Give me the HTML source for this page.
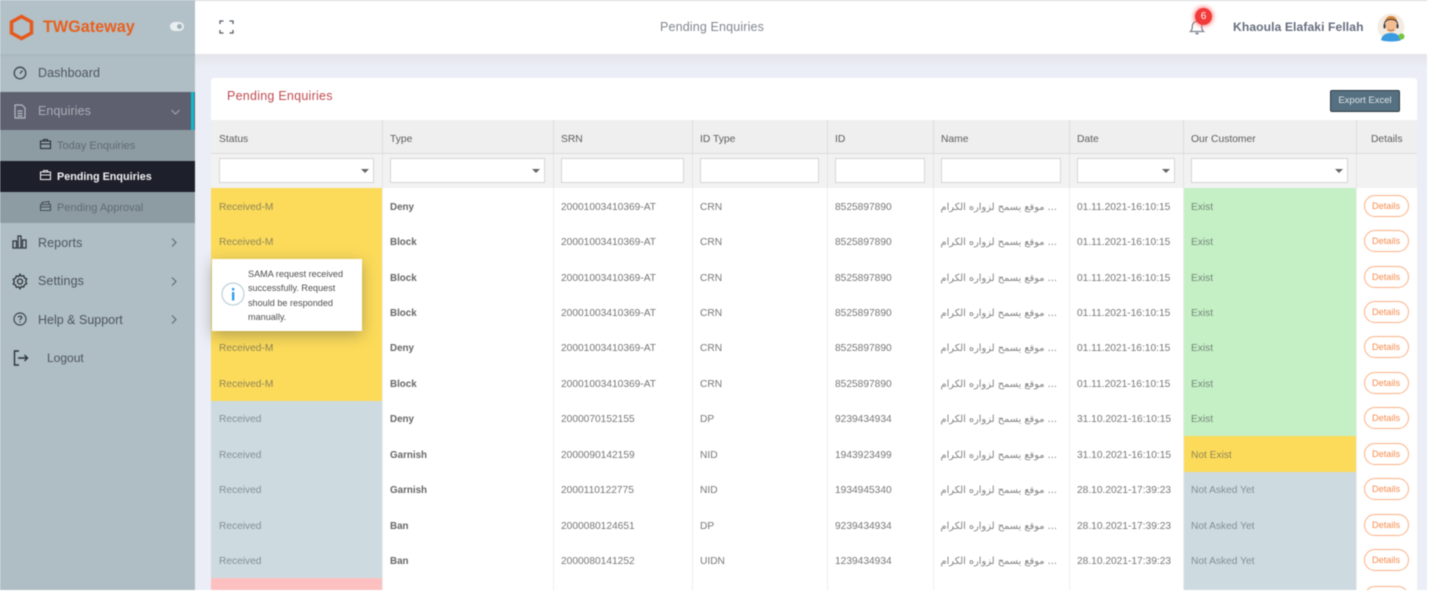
<!DOCTYPE html>
<html><head><meta charset="utf-8"><title>Pending Enquiries</title>
<style>
*{box-sizing:border-box}
html,body{margin:0;padding:0;width:1430px;height:595px;overflow:hidden;background:#fff}
body{font-family:"Liberation Sans",sans-serif;position:relative}
#app{position:absolute;left:0;top:0;width:1427px;height:590px;overflow:hidden;background:#ebeef6;filter:blur(.55px)}
.a{position:absolute;white-space:nowrap}
#side{position:absolute;left:0;top:0;width:194.500px;height:590px;background:#afbdc4}
.mi{position:absolute;left:38px;font-size:12.500px;letter-spacing:.1px;color:#4d5660;line-height:14px}
.sub{position:absolute;left:57px;font-size:11px;color:#5f6a72;line-height:14px}
svg{position:absolute;overflow:visible}
#card{position:absolute;left:211px;top:78px;width:1206px;height:520px;background:#fff;border-radius:3px 3px 0 0}
table{position:absolute;left:211px;top:120px;width:1206px;border-collapse:collapse;table-layout:fixed;font-size:10.200px;color:#777}
th{height:33.500px;background:#efefef;font-weight:400;text-align:left;padding:6px 7.500px 0;color:#5c5c5c;border-right:1px solid #dcdcdc;border-bottom:1px solid #dcdcdc;font-size:10.300px}
tr.f td{height:34.500px;background:#f2f2f2;border-right:1px solid #e2e2e2;padding:0 7.500px;position:relative}
tr.r td{height:35.450px;padding:3px 7.500px 0;border-right:1px solid #eee;white-space:nowrap}
th:first-child,tr.f td:first-child,tr.r td:first-child{padding-left:8px}
.i{height:25px;margin-top:-1px;background:#fff;border:1px solid #d4d4d4;position:relative}
.s:after{content:"";position:absolute;right:4px;top:10px;border:4px solid transparent;border-top:4px solid #666;border-bottom:0}
.y{background:#fcdb5a;color:#8f8658}
.b{background:#cddbe1;color:#848e94}
.g{background:#c5f0c5;color:#74867a}
.p{background:#fdc0c0}
.t{font-weight:700;color:#666;font-size:9.800px}
.ar{font-family:"DejaVu Sans",sans-serif;font-size:9.800px;color:#7f7f7f;display:block;text-align:right;width:116px}
.d{display:block;width:45px;height:22px;border:1px solid #fcb183;border-radius:11px;color:#f58b4c;text-align:center;line-height:21px;font-size:9.200px;margin:-3px 0 0 -.5px}
</style></head><body>
<div id="app">
<div style="position:absolute;left:195px;top:54px;width:1232px;height:14px;background:linear-gradient(#e3e5ea,#ebeef6)"></div>
<div style="position:absolute;left:195px;top:1px;width:1232px;height:53px;background:#fff"></div>
<div style="position:absolute;left:195px;top:0;width:1232px;height:1px;background:#d5d7da"></div>

<svg style="left:219px;top:20px" width="15" height="14" viewBox="0 0 15 14" fill="none" stroke="#555e68" stroke-width="1.300"><path d="M1 4V1h3.500M10.500 1H14v3M14 10v3h-3.500M4.500 13H1v-3"/></svg>
<div class="a" style="left:660px;top:20px;font-size:12.500px;color:#80878f;letter-spacing:.15px">Pending Enquiries</div>

<svg style="left:1189px;top:18px" width="16" height="18" viewBox="0 0 16 18" fill="none" stroke="#7c8591" stroke-width="1.300"><path d="M1.500 13.500c1.300-1.200 1.800-2.400 1.800-5C3.300 5.500 5.200 3.500 8 3.500s4.700 2 4.700 5c0 2.600.5 3.800 1.800 5z"/><path d="M6.500 15.500h3" stroke-width="1.800"/></svg>
<div class="a" style="left:1195px;top:8px;width:17px;height:17px;border-radius:50%;background:#f23a3a;box-shadow:0 0 5px 1px #f77;color:#fff;font-size:10px;line-height:17px;text-align:center">6</div>
<div class="a" style="left:1233px;top:20px;font-size:12.100px;font-weight:700;color:#666d7e;letter-spacing:.1px">Khaoula Elafaki Fellah</div>
<svg style="left:1377px;top:13px" width="28" height="28" viewBox="0 0 28 28">
<circle cx="14" cy="14" r="13.500" fill="#f3ece3"/>
<path d="M4 27c1-5 5-7 10-7s9 2 10 7c-3 2-17 2-20 0z" fill="#3a9be0"/>
<ellipse cx="14" cy="12.500" rx="5.500" ry="7" fill="#f2bd92"/>
<path d="M8 11c-.5-6 3-8 6-8s7 2 6 8c-1-3-3-4-6-4s-5 1-6 4z" fill="#d98431"/>
<path d="M7.500 14V10.500C8 5 20 5 20.500 10.500V14" fill="none" stroke="#3c3c46" stroke-width="1"/>
<rect x="6.500" y="11" width="2" height="4.500" rx="1" fill="#3c3c46"/><rect x="19.500" y="11" width="2" height="4.500" rx="1" fill="#3c3c46"/>
<path d="M11 16.500q3 2 6 0" stroke="#a35f3f" fill="none" stroke-width=".8"/>
<circle cx="24.500" cy="23.500" r="3" fill="#76c442"/>
</svg>

<div id="side">
<div style="position:absolute;left:0;top:0;width:195px;height:54px;background:#b2c0c7"></div>
<div style="position:absolute;left:0;top:54px;width:195px;height:2px;background:#a9b7be"></div>
<svg style="left:9px;top:14px" width="25" height="27" viewBox="0 0 25 27" fill="none" stroke="#e6591d" stroke-width="3.500"><path d="M12.500 2.500L22.500 8v11l-10 5.500L2.500 19V8z"/></svg>
<div class="a" style="left:43px;top:18px;font-size:16.200px;font-weight:700;color:#e8611f">TWGateway</div>
<div class="a" style="left:170px;top:22px;width:14px;height:9px;border-radius:5px;background:#e9eef0"></div>
<div class="a" style="left:177px;top:24px;width:5px;height:5px;border-radius:50%;background:#9fb0b8"></div>

<svg style="left:13px;top:66px" width="14" height="14" viewBox="0 0 14 14" fill="none" stroke="#3e464e" stroke-width="1.300"><circle cx="7" cy="7" r="5.800"/><path d="M7 7.500L9.500 4.500" /></svg>
<div class="mi" style="top:66px">Dashboard</div>

<div style="position:absolute;left:0;top:92px;width:195px;height:38px;background:#5e6070"></div>
<div style="position:absolute;left:191px;top:92px;width:3px;height:38px;background:#0db9cf"></div>
<svg style="left:14px;top:104px" width="12" height="15" viewBox="0 0 12 15" fill="none" stroke="#b4b9bf" stroke-width="1.200"><path d="M1 1h7l3 3v10H1z"/><path d="M3.500 7h5M3.500 9.500h5M3.500 12h5"/></svg>
<div class="mi" style="top:104px;color:#a8adb5">Enquiries</div>
<svg style="left:171px;top:109px" width="9" height="6" viewBox="0 0 9 6" fill="none" stroke="#a2a7ae" stroke-width="1.100"><path d="M.5 1L4.500 5L8.500 1"/></svg>

<div style="position:absolute;left:0;top:130px;width:195px;height:31px;background:#8d9ca3"></div>
<svg style="left:40px;top:139px" width="11" height="10" viewBox="0 0 11 10" fill="none" stroke="#2b3036" stroke-width="1.100"><rect x=".5" y="2" width="10" height="7.500"/><path d="M3.500 2V.5h4V2M.5 5h10"/></svg>
<div class="sub" style="top:138.500px">Today Enquiries</div>

<div style="position:absolute;left:0;top:161px;width:195px;height:31px;background:#1d1f2a"></div>
<svg style="left:40px;top:170px" width="11" height="10" viewBox="0 0 11 10" fill="none" stroke="#e6e7ea" stroke-width="1.100"><rect x=".5" y="2" width="10" height="7.500"/><path d="M3.500 2V.5h4V2M.5 5h10"/></svg>
<div class="sub" style="top:169.500px;color:#f0f1f3;font-weight:700;font-size:10.800px">Pending Enquiries</div>

<div style="position:absolute;left:0;top:192px;width:195px;height:31px;background:#8d9ca3"></div>
<svg style="left:40px;top:201px" width="11" height="10" viewBox="0 0 11 10" fill="none" stroke="#475058" stroke-width="1.100"><path d="M.5 3.500h10v6H.5zM2 3.500V1.500L9 .5v3M.5 6h10"/></svg>
<div class="sub" style="top:200.500px">Pending Approval</div>

<svg style="left:12px;top:235px" width="15" height="14" viewBox="0 0 15 14" fill="none" stroke="#323a42" stroke-width="1.300"><rect x="1" y="6" width="3.500" height="7"/><rect x="6" y="1" width="3" height="12"/><rect x="10.500" y="5" width="3.500" height="8"/></svg>
<div class="mi" style="top:236px">Reports</div>
<svg style="left:171px;top:238px" width="6" height="9" viewBox="0 0 6 9" fill="none" stroke="#5f6a72" stroke-width="1.100"><path d="M1 .5L5 4.500L1 8.500"/></svg>

<svg style="left:12px;top:273px" width="16" height="17" viewBox="0 0 16 17" fill="none" stroke="#2c343b" stroke-width="1.300"><path d="M8 1.300l1.300 1.900 2.400-.5.800 2.300 2.200 1-1 2.400 1 2.300-2.200 1-.8 2.300-2.400-.5L8 15.700l-1.300-1.900-2.400.5-.8-2.300-2.200-1 1-2.300-1-2.400 2.200-1 .8-2.300 2.400.5z"/><circle cx="8" cy="8.500" r="2.500"/></svg>
<div class="mi" style="top:274px">Settings</div>
<svg style="left:171px;top:277px" width="6" height="9" viewBox="0 0 6 9" fill="none" stroke="#5f6a72" stroke-width="1.100"><path d="M1 .5L5 4.500L1 8.500"/></svg>

<svg style="left:13px;top:312px" width="14" height="14" viewBox="0 0 14 14" fill="none" stroke="#3e464e" stroke-width="1.200"><circle cx="7" cy="7" r="6"/><path d="M5.300 5.500C5.500 3.800 8.800 3.800 8.800 5.600C8.800 6.800 7 6.800 7 8.200M7 9.500v1"/></svg>
<div class="mi" style="top:313px;letter-spacing:0">Help &amp; Support</div>
<svg style="left:171px;top:315px" width="6" height="9" viewBox="0 0 6 9" fill="none" stroke="#5f6a72" stroke-width="1.100"><path d="M1 .5L5 4.500L1 8.500"/></svg>

<svg style="left:13px;top:350px" width="16" height="16" viewBox="0 0 16 16" fill="none" stroke="#2c343b" stroke-width="1.400"><path d="M6 1H1.500v14H6M5 8h9.500M11.500 5l3 3-3 3"/></svg>
<div class="mi" style="top:351px;left:47px;letter-spacing:0;font-size:12px">Logout</div>
</div>

<div id="card"></div>
<div class="a" style="left:227px;top:89px;font-size:12.500px;color:#bf4a50;letter-spacing:.25px">Pending Enquiries</div>
<div class="a" style="left:1330px;top:90px;width:70px;height:22px;background:#557080;border:1px solid #2f3a42;border-radius:2px;color:#dfe5e8;font-size:9.500px;line-height:20px;text-align:center">Export Excel</div>

<table>
<colgroup><col style="width:171px"><col style="width:171px"><col style="width:139px"><col style="width:135px"><col style="width:106px"><col style="width:136px"><col style="width:114px"><col style="width:173px"><col style="width:61px"></colgroup>
<tr><th>Status</th><th>Type</th><th>SRN</th><th>ID Type</th><th>ID</th><th>Name</th><th>Date</th><th>Our Customer</th><th style="text-align:center;border-right:0">Details</th></tr>
<tr class="f"><td><div class="i s"></div></td><td><div class="i s"></div></td><td><div class="i"></div></td><td><div class="i"></div></td><td><div class="i"></div></td><td><div class="i"></div></td><td><div class="i s"></div></td><td><div class="i s"></div></td><td style="border-right:0"></td></tr>
<tr class="r"><td class="y">Received-M</td><td class="t">Deny</td><td>20001003410369-AT</td><td>CRN</td><td>8525897890</td><td><span class="ar" dir="rtl">... موقع يسمح لزواره الكرام</span></td><td>01.11.2021-16:10:15</td><td class="g">Exist</td><td><span class="d">Details</span></td></tr>
<tr class="r"><td class="y">Received-M</td><td class="t">Block</td><td>20001003410369-AT</td><td>CRN</td><td>8525897890</td><td><span class="ar" dir="rtl">... موقع يسمح لزواره الكرام</span></td><td>01.11.2021-16:10:15</td><td class="g">Exist</td><td><span class="d">Details</span></td></tr>
<tr class="r"><td class="y">Received-M</td><td class="t">Block</td><td>20001003410369-AT</td><td>CRN</td><td>8525897890</td><td><span class="ar" dir="rtl">... موقع يسمح لزواره الكرام</span></td><td>01.11.2021-16:10:15</td><td class="g">Exist</td><td><span class="d">Details</span></td></tr>
<tr class="r"><td class="y">Received-M</td><td class="t">Block</td><td>20001003410369-AT</td><td>CRN</td><td>8525897890</td><td><span class="ar" dir="rtl">... موقع يسمح لزواره الكرام</span></td><td>01.11.2021-16:10:15</td><td class="g">Exist</td><td><span class="d">Details</span></td></tr>
<tr class="r"><td class="y">Received-M</td><td class="t">Deny</td><td>20001003410369-AT</td><td>CRN</td><td>8525897890</td><td><span class="ar" dir="rtl">... موقع يسمح لزواره الكرام</span></td><td>01.11.2021-16:10:15</td><td class="g">Exist</td><td><span class="d">Details</span></td></tr>
<tr class="r"><td class="y">Received-M</td><td class="t">Block</td><td>20001003410369-AT</td><td>CRN</td><td>8525897890</td><td><span class="ar" dir="rtl">... موقع يسمح لزواره الكرام</span></td><td>01.11.2021-16:10:15</td><td class="g">Exist</td><td><span class="d">Details</span></td></tr>
<tr class="r"><td class="b">Received</td><td class="t">Deny</td><td>2000070152155</td><td>DP</td><td>9239434934</td><td><span class="ar" dir="rtl">... موقع يسمح لزواره الكرام</span></td><td>31.10.2021-16:10:15</td><td class="g">Exist</td><td><span class="d">Details</span></td></tr>
<tr class="r"><td class="b">Received</td><td class="t">Garnish</td><td>2000090142159</td><td>NID</td><td>1943923499</td><td><span class="ar" dir="rtl">... موقع يسمح لزواره الكرام</span></td><td>31.10.2021-16:10:15</td><td class="y">Not Exist</td><td><span class="d">Details</span></td></tr>
<tr class="r"><td class="b">Received</td><td class="t">Garnish</td><td>2000110122775</td><td>NID</td><td>1934945340</td><td><span class="ar" dir="rtl">... موقع يسمح لزواره الكرام</span></td><td>28.10.2021-17:39:23</td><td class="b">Not Asked Yet</td><td><span class="d">Details</span></td></tr>
<tr class="r"><td class="b">Received</td><td class="t">Ban</td><td>2000080124651</td><td>DP</td><td>9239434934</td><td><span class="ar" dir="rtl">... موقع يسمح لزواره الكرام</span></td><td>28.10.2021-17:39:23</td><td class="b">Not Asked Yet</td><td><span class="d">Details</span></td></tr>
<tr class="r"><td class="b">Received</td><td class="t">Ban</td><td>2000080141252</td><td>UIDN</td><td>1239434934</td><td><span class="ar" dir="rtl">... موقع يسمح لزواره الكرام</span></td><td>28.10.2021-17:39:23</td><td class="b">Not Asked Yet</td><td><span class="d">Details</span></td></tr>
<tr class="r"><td class="p"></td><td></td><td></td><td></td><td></td><td></td><td></td><td class="b"></td><td><span class="d" style="margin-top:-1px">&nbsp;</span></td></tr>
</table>

<div class="a" style="left:212px;top:259px;width:150px;height:72px;background:#fff;box-shadow:0 4px 14px rgba(70,70,70,.4)"></div>
<svg style="left:221px;top:282px" width="24" height="24" viewBox="0 0 24 24"><circle cx="12" cy="12" r="11" fill="#fff" stroke="#bdd0da" stroke-width="1.200"/><rect x="11" y="10" width="2.300" height="8.500" fill="#2b9be8"/><rect x="11" y="6" width="2.300" height="2.400" fill="#2b9be8"/></svg>
<div class="a" style="left:248px;top:267px;font-size:9.100px;line-height:14.400px;color:#4e4e4e">SAMA request received<br>successfully. Request<br>should be responded<br>manually.</div>
</div>
</body></html>
